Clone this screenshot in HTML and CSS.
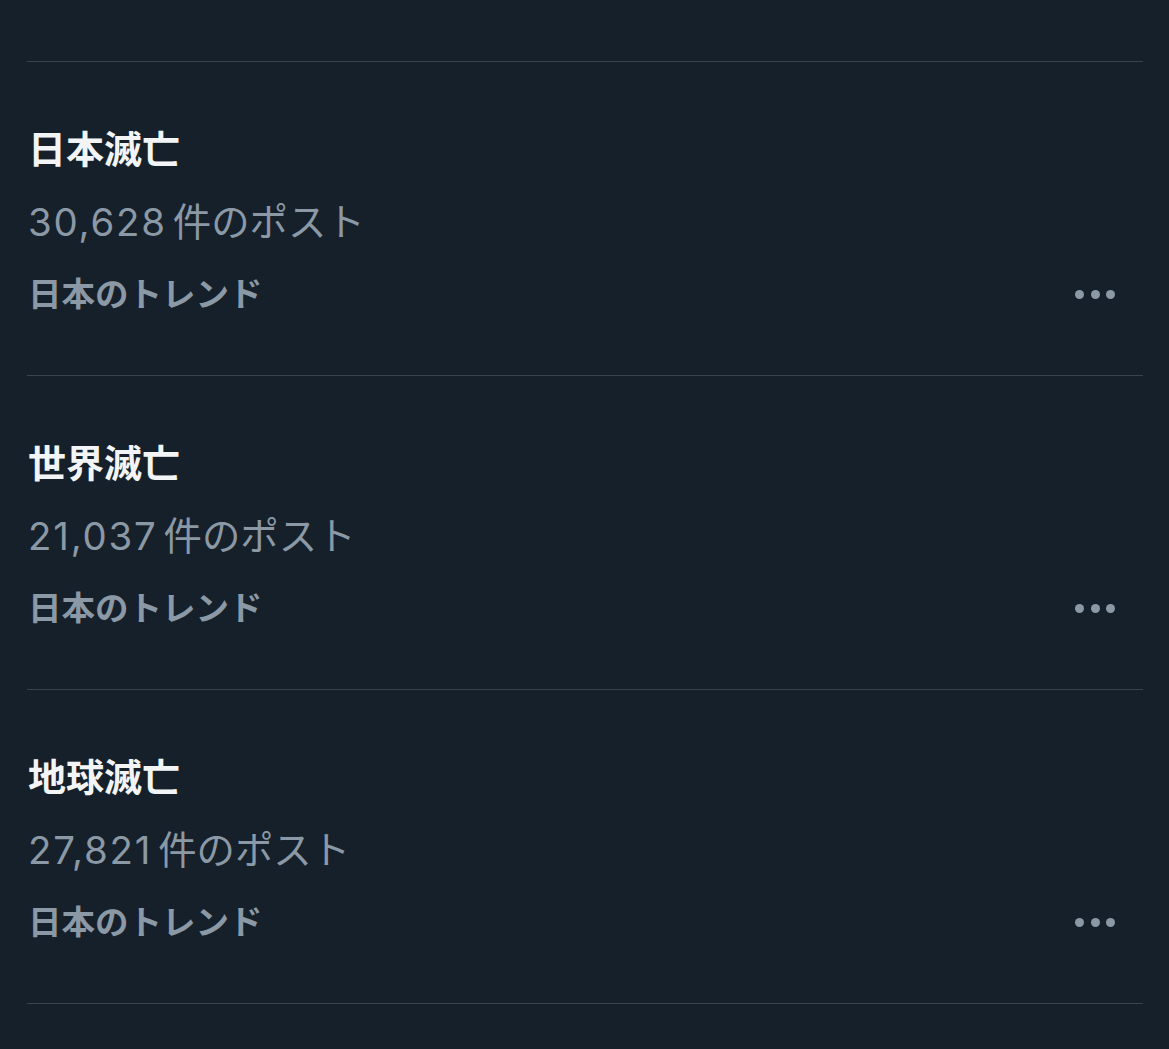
FILE: index.html
```html
<!DOCTYPE html>
<html lang="ja">
<head>
<meta charset="utf-8">
<link rel="stylesheet" href="styles.css">
</head>
<body>
<div class="list">
  <div class="item">
    <div class="title">日本滅亡</div>
    <div class="count"><span class="num">30,628</span>件のポスト</div>
    <div class="trend-row">
      <span class="trend">日本のトレンド</span>
      <span class="more"><i></i><i></i><i></i></span>
    </div>
  </div>
  <div class="item">
    <div class="title">世界滅亡</div>
    <div class="count"><span class="num">21,037</span>件のポスト</div>
    <div class="trend-row">
      <span class="trend">日本のトレンド</span>
      <span class="more"><i></i><i></i><i></i></span>
    </div>
  </div>
  <div class="item">
    <div class="title">地球滅亡</div>
    <div class="count"><span class="num">27,821</span>件のポスト</div>
    <div class="trend-row">
      <span class="trend">日本のトレンド</span>
      <span class="more"><i></i><i></i><i></i></span>
    </div>
  </div>
</div>
</body>
</html>
```

FILE: styles.css
```css
html, body {
  margin: 0;
  padding: 0;
  background: #16202a;
}
body {
  width: 1169px;
  height: 1049px;
  overflow: hidden;
  font-family: "Noto Sans CJK JP", "Noto Sans", sans-serif;
}
.list {
  padding: 61px 26px 0 27px;
}
.item {
  border-top: 1px solid #38444d;
  padding: 49px 0 46px 1px;
}
.item:last-child {
  border-bottom: 1px solid #38444d;
}
.title {
  color: #f2f4f5;
  font-size: 38px;
  font-weight: 700;
  line-height: 72px;
}
.count {
  color: #8b98a5;
  font-family: "Noto Sans CJK JP", sans-serif;
  font-size: 38.4px;
  font-weight: 400;
  line-height: 72px;
  height: 72px;
}
.num {
  font-family: "Inter", sans-serif;
  letter-spacing: 1.8px;
  margin-right: 6px;
  line-height: 1;
}
.trend-row {
  display: flex;
  align-items: center;
  justify-content: space-between;
  height: 74px;
}
.trend {
  color: #8b98a5;
  font-size: 33.5px;
  font-weight: 700;
  line-height: 74px;
}
.more {
  display: flex;
  gap: 6.5px;
  margin-right: 28px;
  margin-top: 5px;
}
.more i {
  display: block;
  width: 9px;
  height: 9px;
  border-radius: 50%;
  background: #8b98a5;
}
```
